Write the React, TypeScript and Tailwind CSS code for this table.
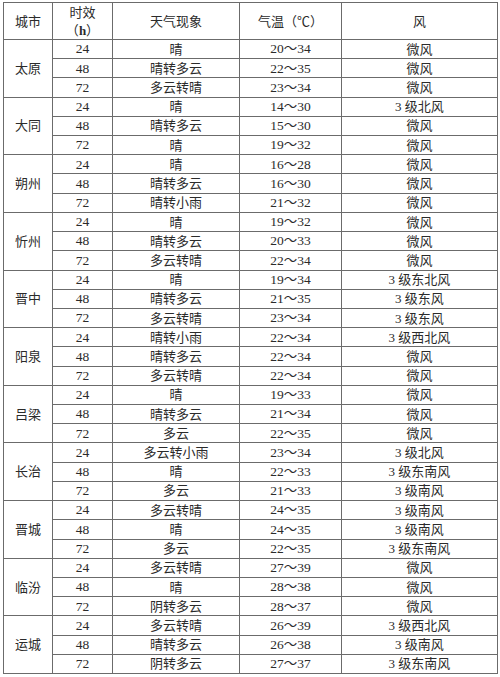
import { Fragment } from "react"

const rows: [string, [string, string, string, string][]][] = [
  ["太原", [["24", "晴", "20～34", "微风"], ["48", "晴转多云", "22～35", "微风"], ["72", "多云转晴", "23～34", "微风"]]],
  ["大同", [["24", "晴", "14～30", "3 级北风"], ["48", "晴转多云", "15～30", "微风"], ["72", "晴", "19～32", "微风"]]],
  ["朔州", [["24", "晴", "16～28", "微风"], ["48", "晴转多云", "16～30", "微风"], ["72", "晴转小雨", "21～32", "微风"]]],
  ["忻州", [["24", "晴", "19～32", "微风"], ["48", "晴转多云", "20～33", "微风"], ["72", "多云转晴", "22～34", "微风"]]],
  ["晋中", [["24", "晴", "19～34", "3 级东北风"], ["48", "晴转多云", "21～35", "3 级东风"], ["72", "多云转晴", "23～34", "3 级东风"]]],
  ["阳泉", [["24", "晴转小雨", "22～34", "3 级西北风"], ["48", "晴转多云", "22～34", "微风"], ["72", "多云转晴", "22～34", "微风"]]],
  ["吕梁", [["24", "晴", "19～33", "微风"], ["48", "晴转多云", "21～34", "微风"], ["72", "多云", "22～35", "微风"]]],
  ["长治", [["24", "多云转小雨", "23～34", "3 级北风"], ["48", "晴", "22～33", "3 级东南风"], ["72", "多云", "21～33", "3 级南风"]]],
  ["晋城", [["24", "多云转晴", "24～35", "3 级南风"], ["48", "晴", "24～35", "3 级南风"], ["72", "多云", "22～35", "3 级东南风"]]],
  ["临汾", [["24", "多云转晴", "27～39", "微风"], ["48", "晴", "28～38", "微风"], ["72", "阴转多云", "28～37", "微风"]]],
  ["运城", [["24", "多云转晴", "26～39", "3 级西北风"], ["48", "晴转多云", "26～38", "3 级南风"], ["72", "阴转多云", "27～37", "3 级东南风"]]],
]

const cell = "bg-white flex items-center justify-center leading-none"

export default function App() {
  return (
    <div className="w-[500px] h-[677px] bg-white pt-[2px] pl-[3px]">
      <div
        className="grid grid-cols-[48px_59px_126px_101px_155px] grid-rows-[36px_repeat(33,minmax(0,1fr))] gap-px bg-[#6b6b6b] border border-[#6b6b6b] w-[495px] h-[672px] text-[13px] text-[#2b2b2b]"
        style={{ fontFamily: '"Liberation Serif", "Noto Sans CJK SC", serif' }}
      >
        <div className={cell}>城市</div>
        <div className={`${cell} flex-col gap-[5px]`}>
          <span>时效</span>
          <span>（<b className="font-bold">h</b>）</span>
        </div>
        <div className={cell}>天气现象</div>
        <div className={cell}>气温（℃）</div>
        <div className={cell}>风</div>
        {rows.map(([city, items]) => (
          <Fragment key={city}>
            <div className={`${cell} row-span-3`}>{city}</div>
            {items.map((r, i) => (
              <Fragment key={i}>
                <div className={`${cell} text-[13.5px]`}>{r[0]}</div>
                <div className={cell}>{r[1]}</div>
                <div className={`${cell} text-[13.5px]`}>{r[2]}</div>
                <div className={cell}>{r[3]}</div>
              </Fragment>
            ))}
          </Fragment>
        ))}
      </div>
    </div>
  )
}
